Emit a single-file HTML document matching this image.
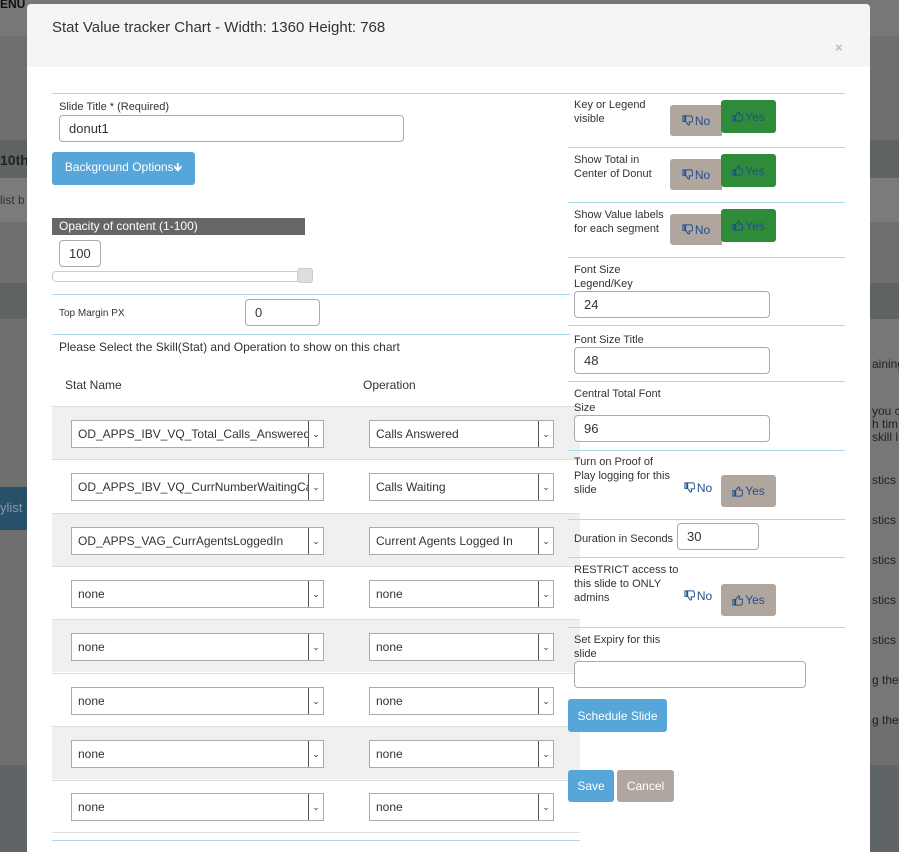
<!DOCTYPE html>
<html style="margin:0;width:899px;height:852px;overflow:hidden;background:rgb(111,111,111)"><head><meta charset="utf-8"><style>
*{box-sizing:border-box}
body{margin:0;width:899px;height:852px;overflow:hidden;background:rgb(111,111,111);font-family:"Liberation Sans","DejaVu Sans",sans-serif;color:#333;position:relative}
.a{position:absolute}
.modal{position:absolute;left:27px;top:4px;width:843px;height:848px;background:#fff;border-radius:4px 4px 0 0;overflow:hidden}
.hdr{position:absolute;left:0;top:0;width:843px;height:63px;background:#f5f5f5;border-radius:4px 4px 0 0}
.bl{position:absolute;height:1px;background:#a9daec}
.inp{position:absolute;border:1px solid #aaa;border-radius:4px;background:#fff;font-size:13px;padding-left:9px;display:flex;align-items:center}
.lab{position:absolute;font-size:11px;line-height:14px;color:#333;white-space:nowrap}
.sel{position:absolute;height:28px;border:1px solid #aaa;background:#fff;font-size:12px;padding-left:6px;display:flex;align-items:center;white-space:nowrap;overflow:hidden}
.sel .ar{position:absolute;right:-1px;top:-1px;width:16px;height:28px;border:1px solid #555;background:#fff;font-size:9px;display:flex;align-items:center;justify-content:center;color:#333}
.row{position:absolute;left:25px;width:528px;height:53px;border-top:1px solid #ddd}
.no{position:absolute;width:52px;height:31px;background:#b0a69e;color:#1f4f8f;font-size:12px;display:flex;align-items:center;justify-content:center;border-radius:3px 0 0 3px;gap:2px}
.yes{position:absolute;width:55px;height:33px;background:#2e8b3a;color:#1f4f8f;font-size:12px;display:flex;align-items:center;justify-content:center;border-radius:3px;gap:2px}
.now{background:#fff}
.yesg{background:#b0a69e}
.btn{position:absolute;background:#56a6da;color:#fff;font-size:12px;display:flex;align-items:center;justify-content:center;border-radius:3px}
.bg{position:absolute;left:872px;font-size:12px;color:#222;white-space:nowrap}
svg{width:11px;height:11px}
</style></head><body>
<div class="a" style="left:0;top:0;width:899px;height:36px;background:#777"></div>
<div class="a" style="left:0;top:140px;width:899px;height:38px;background:#5f6364"></div>
<div class="a" style="left:0;top:178px;width:899px;height:44px;background:#7b7b7b"></div>
<div class="a" style="left:0;top:283px;width:899px;height:36px;background:#5f6364"></div>
<div class="a" style="left:870px;top:319px;width:29px;height:400px;background:#777"></div>
<div class="a" style="left:0;top:487px;width:27px;height:43px;background:#27506b"></div>
<div class="a" style="left:0;top:765px;width:899px;height:87px;background:#5f6466"></div>
<div class="a" style="left:0;top:-3px;font-size:12px;font-weight:bold;color:#111">ENU</div>
<div class="a" style="left:0;top:152px;font-size:14px;font-weight:bold;color:#222">10th</div>
<div class="a" style="left:0;top:193px;font-size:12px;color:#333">list b</div>
<div class="a" style="left:0;top:500px;font-size:13px;color:#89a">ylist</div>
<div class="bg" style="top:357px">aining</div>
<div class="bg" style="top:405px;line-height:13px">you c<br>h tim<br>skill l</div>
<div class="bg" style="top:473px">stics v</div>
<div class="bg" style="top:513px">stics v</div>
<div class="bg" style="top:553px">stics v</div>
<div class="bg" style="top:593px">stics v</div>
<div class="bg" style="top:633px">stics v</div>
<div class="bg" style="top:673px">g the</div>
<div class="bg" style="top:713px">g the</div>

<svg style="display:none"><defs>
<symbol id="up" viewBox="0 0 12 12"><path d="M1 5h2v6H1zM4 5l3-4c1 0 1.5.7 1.2 1.8L7.8 4.5H11c.6 0 1 .5.9 1.1l-1 4.5c-.1.5-.5.9-1 .9H4z" fill="none" stroke="currentColor" stroke-width="1.1"/></symbol>
<symbol id="dn" viewBox="0 0 12 12"><path d="M1 1h2v6H1zM4 7l3 4c1 0 1.5-.7 1.2-1.8L7.8 7.5H11c.6 0 1-.5.9-1.1l-1-4.5c-.1-.5-.5-.9-1-.9H4z" fill="none" stroke="currentColor" stroke-width="1.1"/></symbol>
</defs></svg>

<div class="modal">
<div class="hdr"></div>
<div class="a" style="left:25px;top:15px;font-size:15px;color:#333">Stat Value tracker Chart - Width: 1360 Height: 768</div>
<div class="a" style="left:808px;top:36px;font-size:13px;color:#bbb;font-weight:bold">×</div>

<div class="bl" style="left:25px;top:89px;width:793px"></div>
<div class="lab" style="left:32px;top:96px">Slide Title * (Required)</div>
<div class="inp" style="left:32px;top:111px;width:345px;height:27px">donut1</div>
<div class="btn" style="left:25px;top:148px;width:143px;height:33px">Background Options🡻</div>
<div class="a" style="left:25px;top:214px;width:253px;height:17px;background:#666;color:#fff;font-size:12px;padding-left:7px;line-height:17px">Opacity of content (1-100)</div>
<div class="inp" style="left:32px;top:236px;width:42px;height:27px">100</div>
<div class="a" style="left:25px;top:267px;width:260px;height:11px;border:1px solid #ccc;border-radius:4px"></div>
<div class="a" style="left:270px;top:264px;width:16px;height:15px;background:#ddd;border:1px solid #ccc;border-radius:3px"></div>
<div class="bl" style="left:25px;top:290px;width:518px"></div>
<div class="lab" style="left:32px;top:303px;font-size:10px">Top Margin PX</div>
<div class="inp" style="left:218px;top:295px;width:75px;height:27px">0</div>
<div class="bl" style="left:25px;top:330px;width:518px"></div>
<div class="a" style="left:32px;top:336px;font-size:12px">Please Select the Skill(Stat) and Operation to show on this chart</div>
<div class="a" style="left:38px;top:374px;font-size:12px">Stat Name</div>
<div class="a" style="left:336px;top:374px;font-size:12px">Operation</div>

<div class="row" style="top:402px;background:#f0f0f0"></div>
<div class="row" style="top:455px"></div>
<div class="row" style="top:509px;background:#f0f0f0"></div>
<div class="row" style="top:562px"></div>
<div class="row" style="top:615px;background:#f0f0f0"></div>
<div class="row" style="top:669px"></div>
<div class="row" style="top:722px;background:#f0f0f0"></div>
<div class="row" style="top:776px;border-bottom:1px solid #ddd"></div>
<div class="bl" style="left:25px;top:836px;width:528px"></div>

<div class="sel" style="left:44px;top:416px;width:253px">OD_APPS_IBV_VQ_Total_Calls_Answered<span class="ar">⌄</span></div>
<div class="sel" style="left:342px;top:416px;width:185px">Calls Answered<span class="ar">⌄</span></div>
<div class="sel" style="left:44px;top:469px;width:253px">OD_APPS_IBV_VQ_CurrNumberWaitingCal<span class="ar">⌄</span></div>
<div class="sel" style="left:342px;top:469px;width:185px">Calls Waiting<span class="ar">⌄</span></div>
<div class="sel" style="left:44px;top:523px;width:253px">OD_APPS_VAG_CurrAgentsLoggedIn<span class="ar">⌄</span></div>
<div class="sel" style="left:342px;top:523px;width:185px">Current Agents Logged In<span class="ar">⌄</span></div>
<div class="sel" style="left:44px;top:576px;width:253px">none<span class="ar">⌄</span></div>
<div class="sel" style="left:342px;top:576px;width:185px">none<span class="ar">⌄</span></div>
<div class="sel" style="left:44px;top:629px;width:253px">none<span class="ar">⌄</span></div>
<div class="sel" style="left:342px;top:629px;width:185px">none<span class="ar">⌄</span></div>
<div class="sel" style="left:44px;top:683px;width:253px">none<span class="ar">⌄</span></div>
<div class="sel" style="left:342px;top:683px;width:185px">none<span class="ar">⌄</span></div>
<div class="sel" style="left:44px;top:736px;width:253px">none<span class="ar">⌄</span></div>
<div class="sel" style="left:342px;top:736px;width:185px">none<span class="ar">⌄</span></div>
<div class="sel" style="left:44px;top:789px;width:253px">none<span class="ar">⌄</span></div>
<div class="sel" style="left:342px;top:789px;width:185px">none<span class="ar">⌄</span></div>

<div class="bl" style="left:541px;top:89px;width:277px"></div>
<div class="lab" style="left:547px;top:94px">Key or Legend<br>visible</div>
<div class="no" style="left:643px;top:101px"><svg><use href="#dn"/></svg>No</div><div class="yes" style="left:694px;top:96px"><svg><use href="#up"/></svg>Yes</div>
<div class="bl" style="left:541px;top:143px;width:277px"></div>
<div class="lab" style="left:547px;top:149px">Show Total in<br>Center of Donut</div>
<div class="no" style="left:643px;top:155px"><svg><use href="#dn"/></svg>No</div><div class="yes" style="left:694px;top:150px"><svg><use href="#up"/></svg>Yes</div>
<div class="bl" style="left:541px;top:198px;width:277px"></div>
<div class="lab" style="left:547px;top:204px">Show Value labels<br>for each segment</div>
<div class="no" style="left:643px;top:210px"><svg><use href="#dn"/></svg>No</div><div class="yes" style="left:694px;top:205px"><svg><use href="#up"/></svg>Yes</div>
<div class="bl" style="left:541px;top:253px;width:277px"></div>
<div class="lab" style="left:547px;top:259px">Font Size<br>Legend/Key</div>
<div class="inp" style="left:547px;top:287px;width:196px;height:27px">24</div>
<div class="bl" style="left:541px;top:321px;width:277px"></div>
<div class="lab" style="left:547px;top:329px">Font Size Title</div>
<div class="inp" style="left:547px;top:343px;width:196px;height:27px">48</div>
<div class="bl" style="left:541px;top:377px;width:277px"></div>
<div class="lab" style="left:547px;top:383px">Central Total Font<br>Size</div>
<div class="inp" style="left:547px;top:411px;width:196px;height:27px">96</div>
<div class="bl" style="left:541px;top:446px;width:277px"></div>
<div class="lab" style="left:547px;top:451px">Turn on Proof of<br>Play logging for this<br>slide</div>
<div class="no now" style="left:645px;top:468px"><svg><use href="#dn"/></svg>No</div><div class="yes yesg" style="left:694px;top:471px;height:32px"><svg><use href="#up"/></svg>Yes</div>
<div class="bl" style="left:541px;top:515px;width:277px"></div>
<div class="lab" style="left:547px;top:528px">Duration in Seconds</div>
<div class="inp" style="left:650px;top:519px;width:82px;height:27px">30</div>
<div class="bl" style="left:541px;top:553px;width:277px"></div>
<div class="lab" style="left:547px;top:559px">RESTRICT access to<br>this slide to ONLY<br>admins</div>
<div class="no now" style="left:645px;top:576px"><svg><use href="#dn"/></svg>No</div><div class="yes yesg" style="left:694px;top:580px;height:32px"><svg><use href="#up"/></svg>Yes</div>
<div class="bl" style="left:541px;top:623px;width:277px"></div>
<div class="lab" style="left:547px;top:629px">Set Expiry for this<br>slide</div>
<div class="inp" style="left:547px;top:657px;width:232px;height:27px"></div>
<div class="btn" style="left:541px;top:695px;width:99px;height:33px">Schedule Slide</div>
<div class="btn" style="left:541px;top:766px;width:46px;height:32px">Save</div>
<div class="btn" style="left:590px;top:766px;width:57px;height:32px;background:#b0a69e">Cancel</div>
</div>
</body></html>
